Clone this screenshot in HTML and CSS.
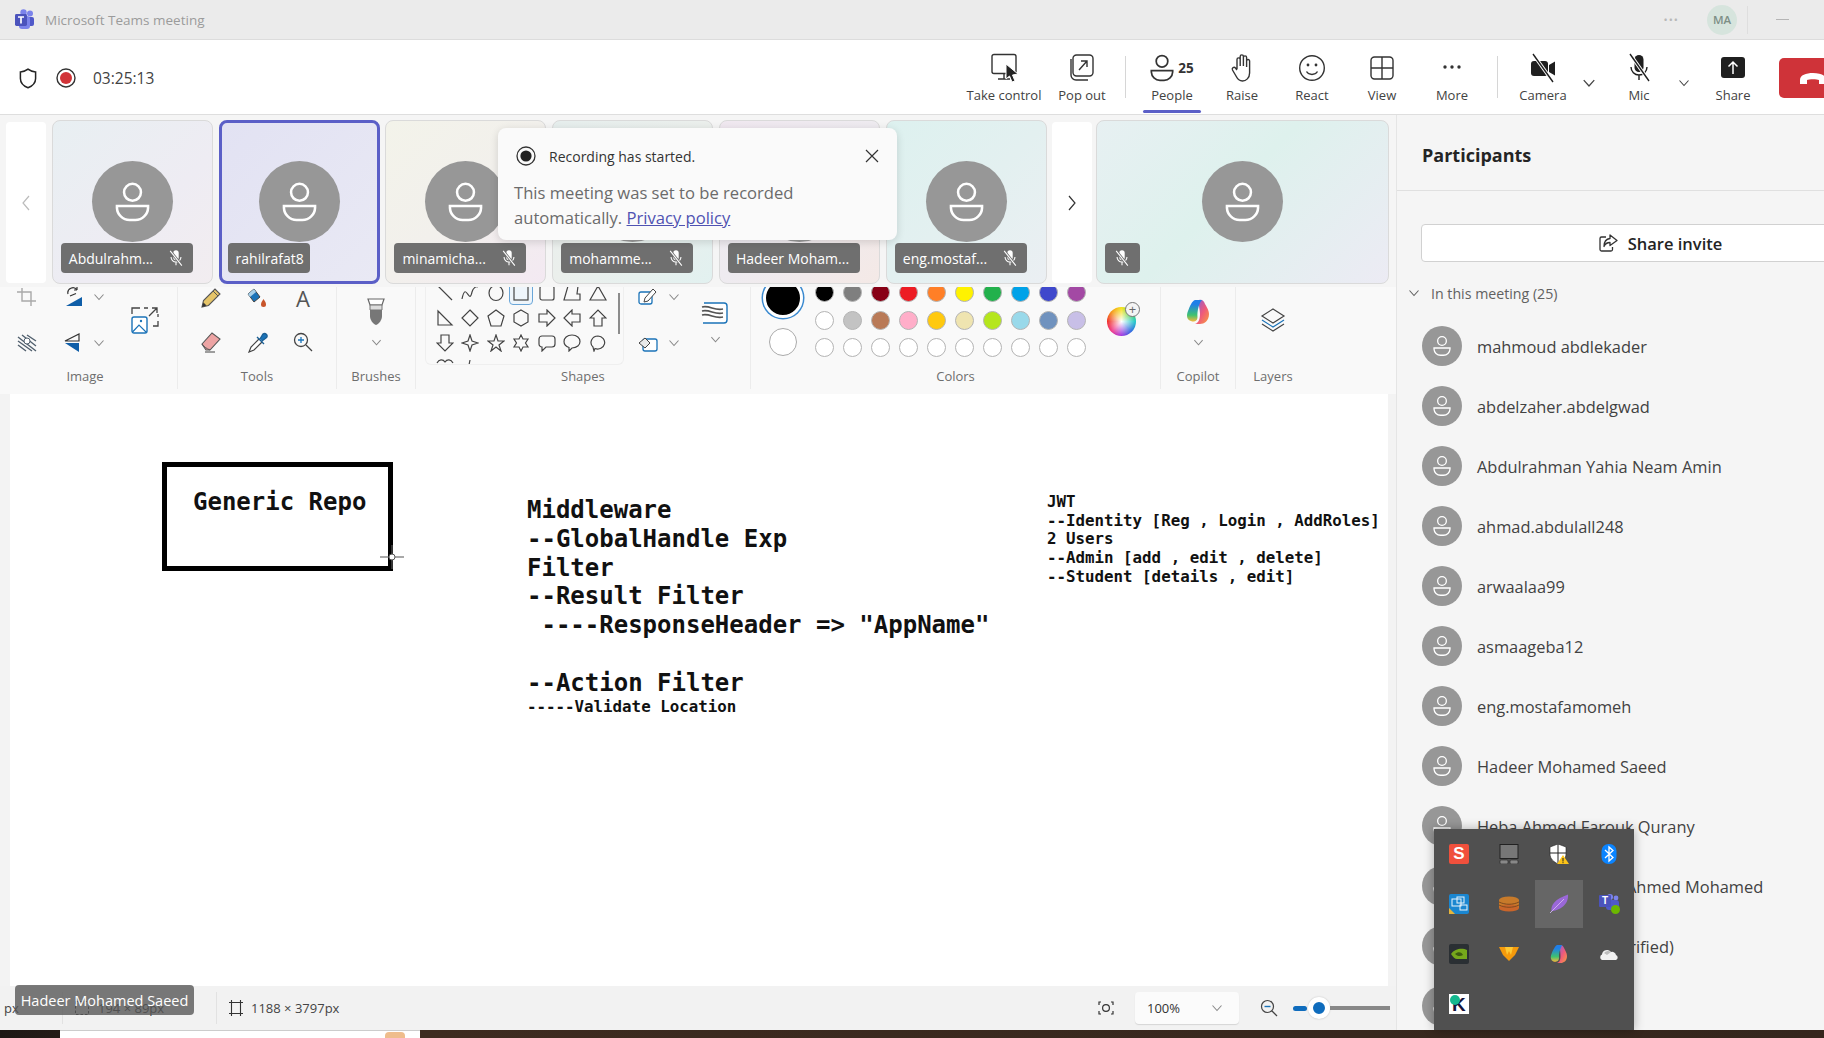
FILE: index.html
```html
<!DOCTYPE html>
<html>
<head>
  <meta charset="utf-8">
  <title>Microsoft Teams meeting</title>
  <link rel="stylesheet" href="styles.css">
</head>
<body>
  <svg class="defs" aria-hidden="true">
    <symbol id="person" viewBox="0 0 36 40">
      <circle cx="18" cy="10" r="8.7" fill="none" stroke="currentColor" stroke-width="2.6"/>
      <path d="M2 24H34V26A13 13 0 0 1 21 38.5H15A13 13 0 0 1 2 26Z" fill="none" stroke="currentColor" stroke-width="2.6"/>
    </symbol>
    <symbol id="mic-off" viewBox="0 0 20 20">
      <rect x="7" y="1.5" width="6" height="11" rx="3" fill="currentColor"/>
      <path d="M4.5 9a5.5 5.5 0 0 0 11 0M10 14.5V18" fill="none" stroke="currentColor" stroke-width="1.2"/>
      <path d="M3.5 2L16.5 18.5" stroke="#6f6f6f" stroke-width="3"/>
      <path d="M3.5 2L16.5 18.5" stroke="currentColor" stroke-width="1.2"/>
    </symbol>
    <symbol id="chev" viewBox="0 0 12 12">
      <path d="M1.5 3.5L6 8.5L10.5 3.5" fill="none" stroke="currentColor" stroke-width="1.1"/>
    </symbol>
  </svg>

  <header class="titlebar">
    <svg class="teams-logo" width="21" height="22" viewBox="0 0 21 22">
      <circle cx="16" cy="4.5" r="3" fill="#7b83eb"/>
      <circle cx="9.5" cy="3.5" r="3.2" fill="#7b83eb"/>
      <rect x="12" y="8" width="8" height="9" rx="2" fill="#5059c9"/>
      <rect x="5" y="7" width="11" height="13" rx="3" fill="#7b83eb"/>
      <rect x="1" y="5" width="12" height="12" rx="1.4" fill="#4b53bc"/>
      <path d="M4 8H10M7 8V14.5" stroke="#fff" stroke-width="1.7"/>
    </svg>
    <span class="title-text">Microsoft Teams meeting</span>
    <span class="title-dots">&#8226;&#8226;&#8226;</span>
    <span class="title-avatar">MA</span>
    <span class="title-divider"></span>
    <span class="title-min"></span>
  </header>

  <section class="toolbar">
    <svg class="shield" width="18" height="21" viewBox="0 0 18 21">
      <path d="M9 1.2C11.3 3 13.8 3.8 16.6 3.9V10.5C16.6 15 13.6 18 9 19.8C4.4 18 1.4 15 1.4 10.5V3.9C4.2 3.8 6.7 3 9 1.2Z" fill="none" stroke="#242424" stroke-width="1.5"/>
    </svg>
    <svg class="rec" width="20" height="20" viewBox="0 0 20 20">
      <circle cx="10" cy="10" r="9" fill="none" stroke="#333" stroke-width="1.4"/>
      <circle cx="10" cy="10" r="6" fill="#d13438"/>
    </svg>
    <span class="timer">03:25:13</span>

    <div class="tools">
      <div class="tool tool-wide">
        <svg width="30" height="30" viewBox="0 0 30 30">
          <rect x="3" y="1.5" width="24" height="19" rx="2" fill="none" stroke="#333" stroke-width="1.4"/>
          <path d="M15 21V26M9 26H21" stroke="#333" stroke-width="1.4"/>
          <path d="M17 11L29 21L23.5 22L26 28L23 29L20.5 23L17 26Z" fill="#242424" stroke="#fff" stroke-width="1"/>
        </svg>
        <span>Take control</span>
      </div>
      <div class="tool tool-pop">
        <svg width="30" height="30" viewBox="0 0 30 30">
          <rect x="6" y="2" width="20" height="21" rx="3.5" fill="none" stroke="#333" stroke-width="1.4"/>
          <path d="M4 6V22A5 5 0 0 0 9 27H21" fill="none" stroke="#333" stroke-width="1.4"/>
          <path d="M12 17L20 8M14 8H20V14" fill="none" stroke="#333" stroke-width="1.4"/>
        </svg>
        <span>Pop out</span>
      </div>
      <span class="tool-sep"></span>
      <div class="tool tool-people">
        <div class="people-icon">
          <svg class="icon-dark" width="24" height="28"><use href="#person"/></svg>
          <b>25</b>
        </div>
        <span>People</span>
      </div>
      <div class="tool">
        <svg width="30" height="30" viewBox="0 0 30 30">
          <path d="M10 16V6.5a1.6 1.6 0 0 1 3.2 0V13M13.2 13V3.5a1.6 1.6 0 0 1 3.2 0V13M16.4 13V4.5a1.6 1.6 0 0 1 3.2 0V14M19.6 14V8a1.5 1.5 0 0 1 3 0V20C22.6 25 19 28 15.5 28C12 28 10.5 26 9 23L5.5 17C4.5 15 7 13.5 8.5 15L10 17" fill="none" stroke="#333" stroke-width="1.4" stroke-linejoin="round"/>
        </svg>
        <span>Raise</span>
      </div>
      <div class="tool">
        <svg width="30" height="30" viewBox="0 0 30 30">
          <circle cx="15" cy="15" r="12.3" fill="none" stroke="#333" stroke-width="1.4"/>
          <circle cx="11" cy="12" r="1.4" fill="#333"/>
          <circle cx="19" cy="12" r="1.4" fill="#333"/>
          <path d="M9.5 18.5C12 22.5 18 22.5 20.5 18.5" fill="none" stroke="#333" stroke-width="1.4"/>
        </svg>
        <span>React</span>
      </div>
      <div class="tool">
        <svg width="30" height="30" viewBox="0 0 30 30">
          <rect x="4" y="4" width="22" height="22" rx="3.5" fill="none" stroke="#333" stroke-width="1.4"/>
          <path d="M15 4V26M4 15H26" stroke="#333" stroke-width="1.4"/>
        </svg>
        <span>View</span>
      </div>
      <div class="tool">
        <svg width="30" height="30" viewBox="0 0 30 30">
          <circle cx="8" cy="14" r="1.7" fill="#333"/>
          <circle cx="15" cy="14" r="1.7" fill="#333"/>
          <circle cx="22" cy="14" r="1.7" fill="#333"/>
        </svg>
        <span>More</span>
      </div>
      <span class="tool-sep tool-sep-right"></span>
      <div class="tool tool-camera">
        <svg width="30" height="30" viewBox="0 0 30 30">
          <rect x="3" y="8" width="17" height="15" rx="3" fill="#1f1f1f"/>
          <path d="M21 12L27 8.5V22.5L21 19Z" fill="#1f1f1f"/>
          <path d="M5 1L25 29" stroke="#fff" stroke-width="3.4"/>
          <path d="M5 1L25 29" stroke="#1f1f1f" stroke-width="1.4"/>
        </svg>
        <span>Camera</span>
      </div>
      <svg class="tool-chev" width="14" height="14"><use href="#chev"/></svg>
      <div class="tool tool-mic">
        <svg width="30" height="30" viewBox="0 0 30 30">
          <rect x="10.5" y="2" width="9" height="17" rx="4.5" fill="#1f1f1f"/>
          <path d="M7 14a8 8 0 0 0 16 0M15 22V27" fill="none" stroke="#1f1f1f" stroke-width="1.4"/>
          <path d="M6 1L25 28" stroke="#fff" stroke-width="3.4"/>
          <path d="M6 1L25 28" stroke="#1f1f1f" stroke-width="1.4"/>
        </svg>
        <span>Mic</span>
      </div>
      <svg class="tool-chev tool-chev-small" width="14" height="14"><use href="#chev"/></svg>
      <div class="tool tool-share">
        <svg width="30" height="30" viewBox="0 0 30 30">
          <rect x="3" y="4" width="24" height="21" rx="3" fill="#1f1f1f"/>
          <path d="M15 21V9M10.5 13.5L15 9L19.5 13.5" fill="none" stroke="#fff" stroke-width="1.5"/>
        </svg>
        <span>Share</span>
      </div>
      <div class="leave">
        <svg width="30" height="16" viewBox="0 0 30 16">
          <path d="M2 13V9C2 4 8 2 15 2C22 2 28 4 28 9V13H21V9C19 8 11 8 9 9V13Z" fill="#fff"/>
        </svg>
      </div>
    </div>
  </section>

  <div class="content">
    <main class="main">
      <div class="strip">
        <div class="nav-btn">
          <svg width="12" height="18" viewBox="0 0 12 18"><path d="M9 2L3 9L9 16" fill="none" stroke="#bbb" stroke-width="1.2"/></svg>
        </div>
        <div class="tile tile-a">
          <div class="avatar"><svg width="35" height="40"><use href="#person"/></svg></div>
          <div class="name-tag"><span>Abdulrahm...</span><svg width="18" height="18"><use href="#mic-off"/></svg></div>
        </div>
        <div class="tile tile-b tile-active">
          <div class="avatar"><svg width="35" height="40"><use href="#person"/></svg></div>
          <div class="name-tag name-tag-short"><span>rahilrafat8</span></div>
        </div>
        <div class="tile tile-c">
          <div class="avatar"><svg width="35" height="40"><use href="#person"/></svg></div>
          <div class="name-tag"><span>minamicha...</span><svg width="18" height="18"><use href="#mic-off"/></svg></div>
        </div>
        <div class="tile tile-d">
          <div class="avatar"><svg width="35" height="40"><use href="#person"/></svg></div>
          <div class="name-tag"><span>mohamme...</span><svg width="18" height="18"><use href="#mic-off"/></svg></div>
        </div>
        <div class="tile tile-e">
          <div class="avatar"><svg width="35" height="40"><use href="#person"/></svg></div>
          <div class="name-tag"><span>Hadeer Moham...</span></div>
        </div>
        <div class="tile tile-f">
          <div class="avatar"><svg width="35" height="40"><use href="#person"/></svg></div>
          <div class="name-tag"><span>eng.mostaf...</span><svg width="18" height="18"><use href="#mic-off"/></svg></div>
        </div>
        <div class="nav-btn nav-btn-next">
          <svg width="12" height="18" viewBox="0 0 12 18"><path d="M3 2L9 9L3 16" fill="none" stroke="#333" stroke-width="1.2"/></svg>
        </div>
        <div class="tile tile-g tile-self">
          <div class="avatar"><svg width="35" height="40"><use href="#person"/></svg></div>
          <div class="name-tag name-tag-icon"><svg width="18" height="18"><use href="#mic-off"/></svg></div>
        </div>
      </div>

      <div class="ribbon">
        <div class="rib-sec sec-image">
          <div class="rib-body">
            <div class="rib-col col-crop">
              <svg width="22" height="20" viewBox="0 0 22 20"><path d="M6 1V14H20M1 5H15V19" fill="none" stroke="#a9a9a9" stroke-width="1.4"/></svg>
              <svg width="22" height="20" viewBox="0 0 22 20">
                <path d="M2 4L20 18M2 8L16 18M2 12L10 18M6 2L20 13M11 2L20 8" stroke="#51606e" stroke-width="1.4"/>
                <circle cx="11" cy="8" r="3" fill="#fff" stroke="#51606e"/>
              </svg>
            </div>
            <div class="rib-col col-flip">
              <svg width="20" height="20" viewBox="0 0 20 20">
                <path d="M2 19L18 10V19Z" fill="#0f5ea8"/>
                <path d="M4 7A5 5 0 0 1 13 3M13 3V0M13 3H10M6 9L12 6.5" fill="none" stroke="#333" stroke-width="1.2"/>
              </svg>
              <svg width="20" height="20" viewBox="0 0 20 20">
                <path d="M1 10L15 10V19Z" fill="#0f5ea8"/>
                <path d="M1 8L15 1V8Z" fill="none" stroke="#333" stroke-width="1.2"/>
              </svg>
            </div>
            <div class="rib-col col-chev">
              <svg class="chev-gray" width="12" height="12"><use href="#chev"/></svg>
              <svg class="chev-gray" width="12" height="12"><use href="#chev"/></svg>
            </div>
            <div class="rib-col col-resize">
              <svg width="28" height="28" viewBox="0 0 28 28">
                <rect x="1" y="11" width="15" height="16" rx="2" fill="#fff" stroke="#1b73b8" stroke-width="1.4"/>
                <circle cx="10" cy="15" r="1.2" fill="#1b73b8"/>
                <path d="M1.5 26L8 19L15 26" fill="none" stroke="#1b73b8" stroke-width="1.2"/>
                <path d="M1 8V2H9M13 2H17M22 20H27V15M27 11V8M18 10L26 2M21 2H26V7" fill="none" stroke="#444" stroke-width="1.3"/>
              </svg>
            </div>
          </div>
          <div class="rib-label">Image</div>
        </div>

        <div class="rib-sec sec-tools">
          <div class="rib-body">
            <div class="rib-col col-tool">
              <svg width="22" height="22" viewBox="0 0 22 22">
                <path d="M2 20L3.5 13.500L15 2L20 7L8.500 18.500Z" fill="#e5c468" stroke="#555" stroke-width="1.1"/>
                <path d="M2 20L3.500 15.500L6.500 18.500Z" fill="#333"/>
                <path d="M13 4L18 9" stroke="#555"/>
              </svg>
              <svg width="22" height="22" viewBox="0 0 22 22">
                <path d="M2 13L12 2L20 8L10 19H6Z" fill="#eda4a4" stroke="#555" stroke-width="1.1"/>
                <path d="M2 13C3 15 7 18 10 19" fill="none" stroke="#555"/>
                <path d="M5 21H15" stroke="#555" stroke-width="1.1"/>
              </svg>
            </div>
            <div class="rib-col col-tool">
              <svg width="22" height="22" viewBox="0 0 22 22">
                <path d="M2 7L8 2L14 10L8 15Z" fill="#1b73b8" stroke="#444"/>
                <path d="M2 7L8 2L10 5L4 10Z" fill="#a8cfe8"/>
                <path d="M17.5 12C15.5 15 15 16 15 17.5A2.5 2.5 0 0 0 20 17.5C20 16 19.5 15 17.5 12Z" fill="#c8552b"/>
              </svg>
              <svg width="22" height="22" viewBox="0 0 22 22">
                <path d="M13 8L5 16L3 21L8 19L16 11" fill="#fff" stroke="#444" stroke-width="1.2"/>
                <path d="M11 6L18 13M14 8L17 3A2.5 2.5 0 0 1 20.5 6.5L16 10" fill="#1b73b8" stroke="#1b5f95" stroke-width="1.4"/>
              </svg>
            </div>
            <div class="rib-col col-tool">
              <span class="letter-a">A</span>
              <svg width="22" height="22" viewBox="0 0 22 22">
                <circle cx="9" cy="9" r="6.5" fill="none" stroke="#444" stroke-width="1.3"/>
                <path d="M14 14L20 20" stroke="#444" stroke-width="1.3"/>
                <path d="M6 9H12M9 6V12" stroke="#1b73b8" stroke-width="1.3"/>
              </svg>
            </div>
          </div>
          <div class="rib-label">Tools</div>
        </div>

        <div class="rib-sec sec-brush">
          <div class="rib-body rib-stack">
            <svg class="stack-top" width="20" height="28" viewBox="0 0 20 28">
              <path d="M2 1H18L16 7H4Z" fill="#fff" stroke="#666" stroke-width="1.2"/>
              <path d="M4 7H16V18C16 22 13 26 10 27C7 26 4 22 4 18Z" fill="#777"/>
              <path d="M4 7H16V12H4Z" fill="#ddd" stroke="#777"/>
            </svg>
            <svg class="chev-gray" width="11" height="11"><use href="#chev"/></svg>
          </div>
          <div class="rib-label">Brushes</div>
        </div>

        <div class="rib-sec sec-shapes">
          <div class="rib-body">
            <div class="shapes-panel">
              <div class="shapes-grid">
                <svg width="18" height="18" viewBox="0 0 18 18"><path d="M2 2L16 16"/></svg>
                <svg width="18" height="18" viewBox="0 0 18 18"><path d="M1 15C5 -4 8 22 11 8C12 4 15 2 17 3"/></svg>
                <svg width="18" height="18" viewBox="0 0 18 18"><ellipse cx="9" cy="9" rx="7" ry="7.5"/></svg>
                <span class="shape-selected"><svg width="18" height="18" viewBox="0 0 18 18"><rect x="2" y="2" width="14" height="14"/></svg></span>
                <svg width="18" height="18" viewBox="0 0 18 18"><rect x="2" y="2" width="14" height="14" rx="2"/></svg>
                <svg width="18" height="18" viewBox="0 0 18 18"><path d="M5 2H15L14 10H17V16H1Z"/></svg>
                <svg width="18" height="18" viewBox="0 0 18 18"><path d="M9 2L17 16H1Z"/></svg>

                <svg width="18" height="18" viewBox="0 0 18 18"><path d="M2 2L16 16H2Z"/></svg>
                <svg width="18" height="18" viewBox="0 0 18 18"><path d="M9 1L17 9L9 17L1 9Z"/></svg>
                <svg width="18" height="18" viewBox="0 0 18 18"><path d="M9 1L17 7L14 17H4L1 7Z"/></svg>
                <svg width="18" height="18" viewBox="0 0 18 18"><path d="M9 1L16 5V13L9 17L2 13V5Z"/></svg>
                <svg width="18" height="18" viewBox="0 0 18 18"><path d="M1 5H9V1L17 9L9 17V13H1Z"/></svg>
                <svg width="18" height="18" viewBox="0 0 18 18"><path d="M17 5H9V1L1 9L9 17V13H17Z"/></svg>
                <svg width="18" height="18" viewBox="0 0 18 18"><path d="M5 17V9H1L9 1L17 9H13V17Z"/></svg>

                <svg width="18" height="18" viewBox="0 0 18 18"><path d="M5 1V9H1L9 17L17 9H13V1Z"/></svg>
                <svg width="18" height="18" viewBox="0 0 18 18"><path d="M9 1L11 7L17 9L11 11L9 17L7 11L1 9L7 7Z"/></svg>
                <svg width="18" height="18" viewBox="0 0 18 18"><path d="M9 1L11 7H17L12 11L14 17L9 13L4 17L6 11L1 7H7Z"/></svg>
                <svg width="18" height="18" viewBox="0 0 18 18"><path d="M9 1L11 5H16L13.5 9L16 13H11L9 17L7 13H2L4.5 9L2 5H7Z"/></svg>
                <svg width="18" height="18" viewBox="0 0 18 18"><path d="M4 2H14A3 3 0 0 1 17 5V10A3 3 0 0 1 14 13H8L4 17V13A3 3 0 0 1 1 10V5A3 3 0 0 1 4 2Z"/></svg>
                <svg width="18" height="18" viewBox="0 0 18 18"><path d="M9 1C14 1 17 4 17 7.5C17 11 14 14 9 14L6 17V13.5C3 12.5 1 10.5 1 7.5C1 4 4 1 9 1Z"/></svg>
                <svg width="18" height="18" viewBox="0 0 18 18"><path d="M9 2A7 6.5 0 1 1 6 14.5L5 17L4 13A7 6.5 0 0 1 9 2Z"/></svg>

                <svg width="18" height="18" viewBox="0 0 18 18"><path d="M1 4C3 0 7 0 9 3C11 0 15 0 17 4"/></svg>
                <svg width="18" height="18" viewBox="0 0 18 18"><path d="M9 1L8 6H4"/></svg>
              </div>
              <span class="shapes-scroll"></span>
            </div>
            <div class="rib-col col-outline">
              <svg width="20" height="20" viewBox="0 0 20 20">
                <rect x="1" y="5" width="13" height="12" rx="2" fill="#fff" stroke="#1b73b8" stroke-width="1.3"/>
                <path d="M6 15L7 11L15 2L18 5L10 14Z" fill="#fff" stroke="#444"/>
              </svg>
              <svg width="20" height="20" viewBox="0 0 20 20">
                <rect x="5" y="6" width="14" height="12" rx="2" fill="#fff" stroke="#1b73b8" stroke-width="1.3"/>
                <path d="M1 10L7 5L12 10L7 15Z" fill="#e9e9e9" stroke="#444"/>
              </svg>
            </div>
            <div class="rib-col col-chev col-chev-shape">
              <svg class="chev-gray" width="12" height="12"><use href="#chev"/></svg>
              <svg class="chev-gray" width="12" height="12"><use href="#chev"/></svg>
            </div>
            <div class="rib-stack col-style">
              <svg width="30" height="30" viewBox="0 0 30 30">
                <path d="M4 5H24A3 3 0 0 1 27 8V22A3 3 0 0 1 24 25H3" fill="#fff" stroke="#1b73b8" stroke-width="1.4"/>
                <path d="M2 9C10 7 14 13 23 11M2 13C10 11 14 17 23 15M2 17C10 15 14 21 23 19" fill="none" stroke="#555" stroke-width="1.6"/>
              </svg>
              <svg class="chev-gray" width="11" height="11"><use href="#chev"/></svg>
            </div>
          </div>
          <div class="rib-label">Shapes</div>
        </div>

        <div class="rib-sec sec-colors">
          <div class="rib-body">
            <div class="current-colors">
              <span class="current-one"></span>
              <span class="current-two"></span>
            </div>
            <div class="swatches">
              <span class="sw sw-black"></span><span class="sw sw-gray"></span><span class="sw sw-maroon"></span><span class="sw sw-red"></span><span class="sw sw-orange"></span><span class="sw sw-yellow"></span><span class="sw sw-green"></span><span class="sw sw-blue"></span><span class="sw sw-indigo"></span><span class="sw sw-purple"></span>
              <span class="sw"></span><span class="sw sw-silver"></span><span class="sw sw-brown"></span><span class="sw sw-pink"></span><span class="sw sw-gold"></span><span class="sw sw-cream"></span><span class="sw sw-lime"></span><span class="sw sw-sky"></span><span class="sw sw-steel"></span><span class="sw sw-lavender"></span>
              <span class="sw"></span><span class="sw"></span><span class="sw"></span><span class="sw"></span><span class="sw"></span><span class="sw"></span><span class="sw"></span><span class="sw"></span><span class="sw"></span><span class="sw"></span>
            </div>
            <div class="wheel"><span class="wheel-plus">+</span></div>
          </div>
          <div class="rib-label">Colors</div>
        </div>

        <div class="rib-sec sec-copilot">
          <div class="rib-body rib-stack">
            <svg class="stack-top" width="28" height="28" viewBox="0 0 28 28">
              <defs>
                <linearGradient id="cp1" x1="0" y1="0" x2="0" y2="1"><stop offset="0.2" stop-color="#1f7fe8"/><stop offset="0.7" stop-color="#3fc36f"/><stop offset="1" stop-color="#f6b83c"/></linearGradient>
                <linearGradient id="cp2" x1="0" y1="0" x2="1" y2="1"><stop offset="0" stop-color="#7a5fe0"/><stop offset="0.55" stop-color="#f05a7a"/><stop offset="1" stop-color="#f7a03c"/></linearGradient>
              </defs>
              <path d="M15 2C18 1 20 3 21 6C22 8 25 12 25 16C25 23 20 26 16 26H11C15 25 16 20 16 16C16 11 14 6 15 2Z" fill="url(#cp2)"/>
              <path d="M11 2H18C15 5 13 13 13.500 19C13.500 24 9 24 7 23C3 22 2 18 4 13C6 8 8 3 11 2Z" fill="url(#cp1)"/>
            </svg>
            <svg class="chev-gray" width="11" height="11"><use href="#chev"/></svg>
          </div>
          <div class="rib-label">Copilot</div>
        </div>

        <div class="rib-sec sec-layers">
          <div class="rib-body rib-stack">
            <svg class="layers-icon" width="26" height="26" viewBox="0 0 26 26">
              <path d="M13 2L24 9L13 16L2 9Z" fill="none" stroke="#444" stroke-width="1.2"/>
              <path d="M2 13L13 20L24 13" fill="none" stroke="#1b73b8" stroke-width="1.2"/>
              <path d="M2 17L13 24L24 17" fill="none" stroke="#444" stroke-width="1.2"/>
            </svg>
          </div>
          <div class="rib-label">Layers</div>
        </div>
      </div>

      <div class="canvas">
        <div class="drawn-box">Generic Repo</div>
        <div class="note note-middleware">Middleware
--GlobalHandle Exp
Filter
--Result Filter
 ----ResponseHeader =&gt; "AppName"

--Action Filter
<span class="note-small">-----Validate Location</span></div>
        <div class="note note-jwt">JWT
--Identity [Reg , Login , AddRoles]
2 Users
--Admin [add , edit , delete]
--Student [details , edit]</div>
        <svg class="cross-cursor" width="26" height="26" viewBox="0 0 26 26">
          <path d="M13 1V10M13 16V25M1 13H10M16 13H25" stroke="#555" stroke-width="1.2"/>
          <circle cx="13" cy="13" r="3" fill="#fff" stroke="#555"/>
        </svg>
      </div>

      <div class="statusbar">
        <span class="status-cut">px</span>
        <span class="status-divider status-divider-first"></span>
        <svg class="status-icon" width="16" height="16" viewBox="0 0 16 16"><rect x="1.5" y="1.5" width="13" height="13" fill="none" stroke="#444" stroke-dasharray="2.5 2"/></svg>
        <span class="status-text status-text-sel">194 &times; 89px</span>
        <span class="status-divider"></span>
        <svg class="status-icon status-canvas" width="14" height="16" viewBox="0 0 14 16">
          <path d="M2.500 0V16M11.500 0V16M0 2.500H14M0 13.500H14" stroke="#333" stroke-width="1.1"/>
        </svg>
        <span class="status-text">1188 &times; 3797px</span>
        <div class="zoom-controls">
          <svg class="fit-icon" width="18" height="14" viewBox="0 0 18 14">
            <path d="M4 1H2V4M14 1H16V4M4 13H2V10M14 13H16V10" fill="none" stroke="#333" stroke-width="1.2"/>
            <circle cx="9" cy="7" r="3.4" fill="none" stroke="#333" stroke-width="1.2"/>
          </svg>
          <div class="zoom-select"><span>100%</span><svg class="chev-gray" width="12" height="12"><use href="#chev"/></svg></div>
          <svg class="zoom-out" width="18" height="18" viewBox="0 0 18 18">
            <circle cx="7.5" cy="7.5" r="6" fill="none" stroke="#444" stroke-width="1.2"/>
            <path d="M12 12L17 17" stroke="#444" stroke-width="1.2"/>
            <path d="M4.5 7.5H10.5" stroke="#1b73b8" stroke-width="1.4"/>
          </svg>
          <div class="slider">
            <span class="slider-fill"></span>
            <span class="slider-knob"></span>
            <span class="slider-rest"></span>
          </div>
        </div>
      </div>
    </main>

    <aside class="sidebar">
      <h2 class="side-title">Participants</h2>
      <button class="invite">
        <svg width="20" height="20" viewBox="0 0 20 20">
          <path d="M8 4H3.5A1.5 1.5 0 0 0 2 5.5V16.5A1.5 1.5 0 0 0 3.5 18H13A1.5 1.5 0 0 0 14.5 16.5V14" fill="none" stroke="#333" stroke-width="1.3"/>
          <path d="M12 2L19 7.5L12 12.5V9.5C9 9.5 7 11 6 13.5C6 9 8 6 12 5.5Z" fill="none" stroke="#333" stroke-width="1.3" stroke-linejoin="round"/>
        </svg>
        Share invite
      </button>
      <div class="group-head">
        <svg width="12" height="12"><use href="#chev"/></svg>
        <span>In this meeting (25)</span>
      </div>
      <ul class="people">
        <li><span class="avatar-small"><svg width="18" height="20"><use href="#person"/></svg></span>mahmoud abdlekader</li>
        <li><span class="avatar-small"><svg width="18" height="20"><use href="#person"/></svg></span>abdelzaher.abdelgwad</li>
        <li><span class="avatar-small"><svg width="18" height="20"><use href="#person"/></svg></span>Abdulrahman Yahia Neam Amin</li>
        <li><span class="avatar-small"><svg width="18" height="20"><use href="#person"/></svg></span>ahmad.abdulall248</li>
        <li><span class="avatar-small"><svg width="18" height="20"><use href="#person"/></svg></span>arwaalaa99</li>
        <li><span class="avatar-small"><svg width="18" height="20"><use href="#person"/></svg></span>asmaageba12</li>
        <li><span class="avatar-small"><svg width="18" height="20"><use href="#person"/></svg></span>eng.mostafamomeh</li>
        <li><span class="avatar-small"><svg width="18" height="20"><use href="#person"/></svg></span>Hadeer Mohamed Saeed</li>
        <li><span class="avatar-small"><svg width="18" height="20"><use href="#person"/></svg></span>Heba Ahmed Farouk Qurany</li>
        <li><span class="avatar-small"><svg width="18" height="20"><use href="#person"/></svg></span><span class="name-behind-a">Ahmed Mohamed</span></li>
        <li><span class="avatar-small"><svg width="18" height="20"><use href="#person"/></svg></span><span class="name-behind-b">(Unverified)</span></li>
        <li><span class="avatar-small"><svg width="18" height="20"><use href="#person"/></svg></span></li>
      </ul>
    </aside>
  </div>

  <div class="desktop-strip">
    <span class="desk-window"><span class="desk-bump"></span></span>
  </div>

  <!-- overlays -->
  <div class="toast">
    <div class="toast-head">
      <svg width="20" height="20" viewBox="0 0 20 20">
        <circle cx="10" cy="10" r="9" fill="none" stroke="#333" stroke-width="1.3"/>
        <circle cx="10" cy="10" r="5.6" fill="#222"/>
      </svg>
      <span>Recording has started.</span>
      <svg class="toast-close" width="16" height="16" viewBox="0 0 16 16"><path d="M2 2L14 14M14 2L2 14" stroke="#333" stroke-width="1.2"/></svg>
    </div>
    <p class="toast-body">This meeting was set to be recorded automatically. <a href="#">Privacy policy</a></p>
  </div>

  <div class="speaker-tip">Hadeer Mohamed Saeed</div>

  <div class="tray">
    <span class="tray-cell"><span class="ic-snag">S</span></span>
    <span class="tray-cell">
      <svg width="20" height="20" viewBox="0 0 20 20">
        <rect x="1" y="0.5" width="18" height="14" fill="#777" stroke="#222"/>
        <rect x="1" y="16" width="8" height="4" rx="1" fill="#888" stroke="#222" stroke-width="0.6"/>
        <rect x="11" y="16" width="8" height="4" rx="1" fill="#888" stroke="#222" stroke-width="0.6"/>
      </svg>
    </span>
    <span class="tray-cell">
      <svg width="20" height="20" viewBox="0 0 20 20">
        <path d="M9 0L17 3V10C17 15 13 18 9 20C5 18 1 15 1 10V3Z" fill="#fff" stroke="#222" stroke-width="0.6"/>
        <path d="M9 0V20M1 9H17" stroke="#222"/>
        <path d="M14 11L20 20H8Z" fill="#fcc419"/>
        <path d="M14 14V17.5M14 18.2V19.2" stroke="#222" stroke-width="1"/>
      </svg>
    </span>
    <span class="tray-cell">
      <svg width="20" height="20" viewBox="0 0 20 20">
        <rect x="2.5" y="0" width="15" height="20" rx="7" fill="#0a84ff"/>
        <path d="M6 6L14 13.5L10 17V3L14 6.5L6 14" fill="none" stroke="#fff" stroke-width="1.3"/>
      </svg>
    </span>

    <span class="tray-cell">
      <svg width="20" height="20" viewBox="0 0 20 20">
        <rect width="20" height="20" rx="2" fill="#1a86d0"/>
        <rect x="3" y="5" width="9" height="7" fill="none" stroke="#e9f4fb"/>
        <rect x="8" y="3" width="7" height="6" fill="none" stroke="#e9f4fb"/>
        <rect x="11" y="11" width="7" height="5" fill="none" stroke="#e9f4fb"/>
        <path d="M0 14L6 20H0Z" fill="#e6b53a"/>
      </svg>
    </span>
    <span class="tray-cell">
      <svg width="20" height="20" viewBox="0 0 20 20">
        <ellipse cx="10" cy="6" rx="10" ry="3.6" fill="#c77a2a"/>
        <rect y="6" width="20" height="8" fill="#c77a2a"/>
        <ellipse cx="10" cy="14" rx="10" ry="3.6" fill="#c9652a"/>
        <path d="M0 8C6 11 14 11 20 8M0 11C6 14 14 14 20 11" fill="none" stroke="#7e4a20"/>
      </svg>
    </span>
    <span class="tray-cell tray-active">
      <svg width="20" height="20" viewBox="0 0 20 20">
        <path d="M0.500 19.500C1.500 19 2 18 2.500 17C1.500 11 7 6 11 4C14 2.500 17 1.500 19 0.500C19.500 6 17 10 14 12.500C11 15 7 16.500 3.500 17Z" fill="#9a68d8"/>
        <path d="M1 19L15 5" stroke="#d9c2f5" stroke-width="0.8"/>
      </svg>
    </span>
    <span class="tray-cell">
      <svg width="20" height="20" viewBox="0 0 20 20">
        <circle cx="17" cy="4" r="2.4" fill="#7b83eb"/>
        <circle cx="11" cy="3" r="3" fill="#7b83eb"/>
        <rect x="7" y="6" width="13" height="10" rx="3" fill="#5059c9"/>
      </svg>
      <span class="ic-teams-t">T</span>
      <span class="ic-teams-ok"></span>
    </span>

    <span class="tray-cell">
      <svg width="20" height="20" viewBox="0 0 20 20">
        <rect width="20" height="20" rx="2" fill="#2a2f33"/>
        <path d="M2 10C6 4 14 4 18 6V15H8C6 15 4 13 2 10Z" fill="#76a81c"/>
        <path d="M6 10C9 7 13 8 14 11C11 13 8 12 6 10Z" fill="#3e5c10"/>
      </svg>
    </span>
    <span class="tray-cell">
      <svg width="20" height="20" viewBox="0 0 20 20"><path d="M0 3H20L16 11L10 17L4 11Z" fill="#f59a0c"/><path d="M6 3L8 11L10 7L12 11L14 3" fill="#ffc933"/></svg>
    </span>
    <span class="tray-cell">
      <svg width="20" height="20" viewBox="0 0 20 20">
        <path d="M11 1C13 0.500 14.500 2 15 4C16 6 18 9 18 12C18 17 14.500 19 12 19H8C11 18 11.500 15 11.500 12C11.500 8 10.500 4 11 1Z" fill="url(#cp2)"/>
        <path d="M8 1H13C11 5 9.500 10 10 14C10 18 6 18 4.500 17.500C2 16.500 1 13.500 2.500 10C4 6 6 2 8 1Z" fill="url(#cp1)"/>
      </svg>
    </span>
    <span class="tray-cell">
      <svg width="20" height="20" viewBox="0 0 20 20">
        <path d="M3 16A3 3 0 0 1 3 10.500A5 5 0 0 1 12 8A4 4 0 0 1 17 11A2.700 2.700 0 0 1 17 16Z" fill="#f2f2f2"/>
        <path d="M5 9A5 5 0 0 1 12 8L8 11Z" fill="#bdbdbd"/>
      </svg>
    </span>

    <span class="tray-cell">
      <span class="ic-k">K<span class="ic-k-ok"></span></span>
    </span>
  </div>
</body>
</html>
```

FILE: styles.css
```css
* {
  box-sizing: border-box;
}
html, body {
  margin: 0;
  height: 100%;
}
body {
  position: relative;
  width: 1824px;
  height: 1038px;
  overflow: hidden;
  display: flex;
  flex-direction: column;
  font-family: "Open Sans", "Noto Sans", sans-serif;
  color: #242424;
  background: #f3f3f3;
}
.defs {
  position: absolute;
  width: 0;
  height: 0;
}

/* title bar */
.titlebar {
  height: 40px;
  flex: none;
  display: flex;
  align-items: center;
  padding-left: 14px;
  background: #ebebeb;
  border-bottom: 1px solid #dcdcdc;
}
.title-text {
  margin-left: 10px;
  font-size: 13.5px;
  color: #9b9b9b;
}
.title-dots {
  margin-left: auto;
  font-size: 11px;
  letter-spacing: 1px;
  color: #b8b8b8;
}
.title-avatar {
  width: 30px;
  height: 30px;
  margin-left: 28px;
  border-radius: 50%;
  display: flex;
  align-items: center;
  justify-content: center;
  font-size: 11.5px;
  font-weight: 600;
  color: #7d8f86;
  background: #d6e4dd;
}
.title-divider {
  width: 1px;
  height: 28px;
  margin-left: 10px;
  background: #dedede;
}
.title-min {
  width: 13px;
  height: 1px;
  margin: 0 35px 0 28px;
  background: #b5b5b5;
}

/* meeting toolbar */
.toolbar {
  height: 75px;
  flex: none;
  display: flex;
  align-items: center;
  padding-left: 19px;
  background: #fff;
  border-bottom: 1px solid #dedede;
}
.shield,
.rec,
.timer {
  margin-top: 2px;
}
.rec {
  margin-left: 19px;
}
.timer {
  margin-left: 17px;
  font-size: 15.5px;
  color: #424242;
}
.tools {
  margin-left: auto;
  height: 100%;
  display: flex;
  align-items: flex-start;
}
.tool {
  width: 70px;
  padding-top: 13px;
  height: 100%;
  display: flex;
  flex-direction: column;
  align-items: center;
  position: relative;
  font-size: 13px;
  color: #424242;
}
.tool span {
  margin-top: 3px;
  white-space: nowrap;
}
.tool-wide {
  width: 80px;
}
.tool-pop {
  width: 76px;
}
.tool-sep {
  width: 1px;
  height: 42px;
  margin: 16px 11px 0 5px;
  background: #d6d6d6;
}
.tool-sep-right {
  margin-left: 10px;
}
.people-icon {
  height: 30px;
  display: flex;
  align-items: center;
  gap: 4px;
}
.people-icon b {
  font-size: 13.5px;
  color: #333;
}
.icon-dark {
  color: #333;
}
.tool-people::after {
  content: "";
  position: absolute;
  left: 6px;
  right: 6px;
  bottom: 1px;
  height: 3px;
  border-radius: 2px;
  background: #5b5fc7;
}
.tool-camera {
  margin-left: -1px;
}
.tool-chev {
  width: 22px;
  margin-top: 36px;
  color: #444;
}
.tool-mic {
  width: 78px;
}
.tool-chev-small {
  width: 12px;
}
.tool-share {
  width: 86px;
}
.leave {
  width: 45px;
  height: 40px;
  margin: 18px 0 0 3px;
  padding: 12px 0 0 19px;
  border-radius: 5px 0 0 5px;
  overflow: hidden;
  background: #cf3339;
}

/* layout */
.content {
  flex: 1;
  min-height: 0;
  display: flex;
}
.main {
  width: 1396px;
  flex: none;
  display: flex;
  flex-direction: column;
  overflow: hidden;
}

/* video strip */
.strip {
  height: 172px;
  flex: none;
  display: flex;
  gap: 5.8px;
  padding: 5px 0 0 6px;
  background: #f5f5f5;
}
.nav-btn {
  width: 40px;
  height: 161px;
  margin-top: 2px;
  display: flex;
  align-items: center;
  justify-content: center;
  border-radius: 4px;
  background: #fff;
}
.nav-btn-next {
  margin-left: -1px;
  margin-right: -1px;
}
.tile {
  width: 161px;
  height: 164px;
  flex: none;
  display: flex;
  flex-direction: column;
  padding: 40px 8px 9px;
  border: 1px solid #dadada;
  border-radius: 8px;
}
.tile-active {
  padding: 38px 6px 7px;
  border: 3px solid #5b5fc7;
}
.tile-self {
  width: 293px;
}
.tile-a { background: linear-gradient(135deg, #e8eff2, #eeecf3 60%, #f2edf0); }
.tile-b { background: linear-gradient(135deg, #e2e2f3, #e9e9f4); }
.tile-c { background: linear-gradient(135deg, #f3f3ea, #f2f0ec 50%, #f3e9f2); }
.tile-d { background: linear-gradient(135deg, #e6eeed, #ebefec 50%, #e2f1f0); }
.tile-e { background: linear-gradient(135deg, #f0e8f0, #eeebf0 50%, #f4e9e6); }
.tile-f { background: linear-gradient(135deg, #ddf1ef, #e3f0f0 50%, #ebeff3); }
.tile-g { background: linear-gradient(135deg, #e7f0f2, #def1ed 45%, #ecebf4); }
.avatar {
  width: 81px;
  height: 81px;
  flex: none;
  align-self: center;
  display: flex;
  align-items: center;
  justify-content: center;
  border-radius: 50%;
  color: #fff;
  background: #979797;
}
.name-tag {
  width: 132px;
  height: 30px;
  margin-top: 1px;
  flex: none;
  display: flex;
  align-items: center;
  justify-content: space-between;
  padding: 0 8px;
  border-radius: 4px;
  font-size: 14px;
  white-space: nowrap;
  color: #fff;
  background: #6f6f6f;
}
.name-tag-short {
  width: 82px;
}
.name-tag-icon {
  width: 35px;
}

/* paint ribbon */
.ribbon {
  height: 107px;
  flex: none;
  display: flex;
  overflow: hidden;
  color: #666;
  background: #f9f9f9;
}
.rib-sec {
  height: 102px;
  flex: none;
  display: flex;
  flex-direction: column;
  border-right: 1px solid #ececec;
}
.rib-body {
  height: 79px;
  flex: none;
  display: flex;
}
.rib-label {
  flex: 1;
  font-size: 13px;
  line-height: 20px;
  text-align: center;
  color: #6e6e6e;
}
.rib-col {
  height: 66px;
  flex: none;
  display: flex;
  flex-direction: column;
  align-items: center;
  justify-content: space-between;
}
.rib-stack {
  display: flex;
  flex-direction: column;
  align-items: center;
}
.chev-gray {
  color: #8a8a8a;
}
.sec-image {
  width: 178px;
}
.sec-image .rib-body {
  padding-left: 15px;
}
.sec-image .rib-label {
  padding-right: 7px;
}
.col-crop {
  width: 24px;
}
.col-flip {
  width: 24px;
  margin-left: 23px;
}
.col-chev {
  width: 12px;
  margin-left: 7px;
  padding: 4px 0;
}
.col-resize {
  width: 30px;
  margin-left: 25px;
  justify-content: center;
}
.sec-tools {
  width: 159px;
}
.sec-tools .rib-body {
  padding-left: 10px;
}
.col-tool {
  width: 46px;
}
.letter-a {
  height: 22px;
  font-size: 22px;
  line-height: 22px;
  color: #555;
}
.sec-brush {
  width: 79px;
}
.stack-top {
  margin-top: 11px;
  margin-bottom: 11px;
}
.sec-shapes {
  width: 335px;
}
.sec-shapes .rib-label {
  text-align: left;
  padding-left: 145px;
}
.shapes-panel {
  position: relative;
  width: 199px;
  height: 78px;
  margin-left: 9px;
  overflow: hidden;
  border: 1px solid #efefef;
  border-top: none;
  border-radius: 0 0 6px 6px;
}
.shapes-grid {
  display: grid;
  grid-template-columns: repeat(7, 25.5px);
  grid-auto-rows: 25px;
  margin: -7px 0 0 6px;
  justify-items: center;
  align-items: center;
}
.shapes-grid svg {
  fill: none;
  stroke: #444;
  stroke-width: 1.2;
}
.shape-selected {
  width: 24px;
  height: 24px;
  display: flex;
  align-items: center;
  justify-content: center;
  border: 1px solid #6aa6d8;
  border-radius: 4px;
  background: #eef5fb;
}
.shapes-scroll {
  position: absolute;
  left: 192px;
  top: 6px;
  width: 2px;
  height: 41px;
  background: #8c8c8c;
}
.col-outline {
  width: 20px;
  margin-left: 14px;
}
.col-chev-shape {
  margin-left: 10px;
}
.col-style {
  width: 30px;
  margin-left: 20px;
  padding-top: 11px;
  gap: 6px;
}
.sec-colors {
  width: 410px;
}
.sec-colors .rib-body {
  padding-left: 12px;
}
.current-colors {
  width: 40px;
  margin-top: -9px;
  display: flex;
  flex-direction: column;
  align-items: center;
  gap: 10px;
}
.current-one {
  width: 40px;
  height: 40px;
  border: 3px solid #fff;
  border-radius: 50%;
  background: #000;
  box-shadow: 0 0 0 1.5px #3b8ad0;
}
.current-two {
  width: 28px;
  height: 28px;
  border: 1px solid #aaa;
  border-radius: 50%;
  background: #fff;
}
.swatches {
  width: 280px;
  margin: -8px 0 0 7px;
  display: grid;
  grid-template-columns: repeat(10, 28px);
  grid-auto-rows: 27.5px;
  justify-items: center;
  align-items: center;
}
.sw {
  width: 19px;
  height: 19px;
  border: 1px solid #b4b4b4;
  border-radius: 50%;
  background: #fff;
}
.sw-black { background: #000; }
.sw-gray { background: #7f7f7f; }
.sw-maroon { background: #880015; }
.sw-red { background: #ed1c24; }
.sw-orange { background: #ff7f27; }
.sw-yellow { background: #fff200; }
.sw-green { background: #22b14c; }
.sw-blue { background: #00a2e8; }
.sw-indigo { background: #3f48cc; }
.sw-purple { background: #a349a4; }
.sw-silver { background: #c3c3c3; }
.sw-brown { background: #b97a57; }
.sw-pink { background: #ffaec9; }
.sw-gold { background: #ffc90e; }
.sw-cream { background: #efe4b0; }
.sw-lime { background: #b5e61d; }
.sw-sky { background: #99d9ea; }
.sw-steel { background: #7092be; }
.sw-lavender { background: #c8bfe7; }
.wheel {
  position: relative;
  width: 29px;
  height: 29px;
  margin: 20px 0 0 17px;
  border-radius: 50%;
  background:
    radial-gradient(circle, #fff 0, rgba(255, 255, 255, 0) 68%),
    conic-gradient(#f5e21a, #5bd23c, #1fc8c8, #2f6be0, #a43be0, #f03a8c, #f0322c, #f59a1a, #f5e21a);
}
.wheel-plus {
  position: absolute;
  right: -4px;
  top: -5px;
  width: 15px;
  height: 15px;
  display: flex;
  align-items: center;
  justify-content: center;
  border: 1px solid #777;
  border-radius: 50%;
  font-size: 13px;
  line-height: 1;
  color: #666;
  background: #f4f4f4;
}
.sec-copilot {
  width: 75px;
}
.sec-layers {
  width: 74px;
  border-right: none;
}
.layers-icon {
  margin-top: 20px;
}

/* paint canvas */
.canvas {
  position: relative;
  height: 592px;
  flex: none;
  margin: 0 8px 0 10px;
  background: #fff;
}
.drawn-box {
  position: absolute;
  left: 152px;
  top: 68px;
  width: 231px;
  height: 109px;
  padding: 21px 0 0 26px;
  border: 5px solid #000;
  font: bold 24px/28px "DejaVu Sans Mono", monospace;
  color: #111;
  white-space: pre;
}
.note {
  position: absolute;
  font-family: "DejaVu Sans Mono", monospace;
  font-weight: bold;
  white-space: pre;
  color: #111;
}
.note-middleware {
  left: 517px;
  top: 102px;
  font-size: 24px;
  line-height: 28.8px;
}
.note-small {
  display: block;
  font-size: 15.8px;
  line-height: 18px;
}
.note-jwt {
  left: 1037px;
  top: 99px;
  font-size: 15.8px;
  line-height: 18.7px;
}
.cross-cursor {
  position: absolute;
  left: 369px;
  top: 150px;
}

/* status bar */
.statusbar {
  height: 44px;
  flex: none;
  display: flex;
  align-items: center;
  padding-right: 6px;
  font-size: 13px;
  color: #444;
  background: #f2f2f2;
}
.status-cut {
  width: 16px;
  margin-left: 4px;
}
.status-divider {
  width: 1px;
  height: 32px;
  background: #e2e2e2;
}
.status-divider-first {
  margin-left: 42px;
}
.status-icon {
  margin-left: 11px;
}
.status-text {
  margin-left: 8px;
}
.status-text-sel {
  width: 118px;
}
.status-canvas {
  margin-left: 12px;
}
.zoom-controls {
  margin-left: auto;
  display: flex;
  align-items: center;
}
.zoom-select {
  width: 104px;
  height: 32px;
  margin-left: 20px;
  padding: 0 16px 0 12px;
  display: flex;
  align-items: center;
  justify-content: space-between;
  border-radius: 4px;
  font-size: 13px;
  color: #333;
  background: #fbfbfb;
  box-shadow: 0 1px 1px rgba(0, 0, 0, 0.12);
}
.zoom-out {
  margin-left: 21px;
}
.slider {
  width: 97px;
  margin-left: 15px;
  display: flex;
  align-items: center;
}
.slider-fill {
  width: 14px;
  height: 5px;
  border-radius: 3px;
  background: #0f6cbd;
}
.slider-knob {
  width: 22px;
  height: 22px;
  margin-left: 1px;
  border: 5.5px solid #fff;
  border-radius: 50%;
  background: #0f6cbd;
  box-shadow: 0 0 2px rgba(0, 0, 0, 0.2);
}
.slider-rest {
  flex: 1;
  height: 4px;
  background: #888;
}

/* participants */
.sidebar {
  flex: 1;
  min-width: 0;
  overflow: hidden;
  border-left: 1px solid #e5e5e5;
  background: #f5f5f5;
}
.side-title {
  height: 76px;
  margin: 0;
  padding: 28px 0 0 25px;
  border-bottom: 1px solid #e0e0e0;
  font-size: 18px;
  line-height: 24px;
  font-weight: 700;
  color: #242424;
}
.invite {
  width: 478px;
  height: 38px;
  margin: 33px 0 0 24px;
  display: flex;
  align-items: center;
  justify-content: center;
  gap: 10px;
  border: 1px solid #d1d1d1;
  border-radius: 4px;
  font-family: inherit;
  font-size: 16.5px;
  font-weight: 600;
  color: #242424;
  background: #fff;
}
.group-head {
  height: 28px;
  margin-top: 17px;
  padding-left: 11px;
  display: flex;
  align-items: center;
  gap: 11px;
  font-size: 14.2px;
  color: #616161;
}
.people {
  list-style: none;
  margin: 9px 0 0;
  padding: 0;
}
.people li {
  height: 60px;
  padding-left: 25px;
  display: flex;
  align-items: center;
  font-size: 16.4px;
  white-space: nowrap;
  color: #424242;
}
.avatar-small {
  width: 40px;
  height: 40px;
  flex: none;
  margin-right: 15px;
  display: flex;
  align-items: center;
  justify-content: center;
  border-radius: 50%;
  color: #fff;
  background: #979797;
}
.name-behind-a {
  margin-left: 149px;
}
.name-behind-b {
  margin-left: 108px;
}

/* desktop peeking under the window */
.desktop-strip {
  height: 8px;
  flex: none;
  padding-left: 60px;
  background: linear-gradient(90deg, #1d1815 0, #241b16 60px, #3e2b20 420px, #35261d 100%);
}
.desk-window {
  position: relative;
  display: block;
  width: 360px;
  height: 8px;
  border-top: 1px solid #ccc;
  background: #fff;
}
.desk-bump {
  position: absolute;
  left: 325px;
  top: 1px;
  width: 20px;
  height: 7px;
  border-radius: 4px 4px 0 0;
  background: #efbd8c;
}

/* recording toast */
.toast {
  position: absolute;
  left: 498px;
  top: 128px;
  width: 399px;
  height: 112px;
  padding: 17px 16px 0 18px;
  border-radius: 8px;
  background: #fafafa;
  box-shadow: 0 2px 8px rgba(0, 0, 0, 0.14);
}
.toast-head {
  display: flex;
  align-items: center;
  height: 22px;
  font-size: 14px;
  color: #333;
}
.toast-head span {
  margin-left: 13px;
}
.toast-close {
  margin-left: auto;
  margin-right: 1px;
}
.toast-body {
  margin: 13px 0 0 -2px;
  width: 300px;
  font-size: 16.6px;
  line-height: 25px;
  color: #6b6b6b;
}
.toast-body a {
  color: #4f52b2;
}

/* active speaker tooltip */
.speaker-tip {
  position: absolute;
  left: 15px;
  top: 985px;
  width: 179px;
  height: 30px;
  display: flex;
  align-items: center;
  justify-content: center;
  border-radius: 4px;
  font-size: 14.5px;
  white-space: nowrap;
  color: #fff;
  background: rgba(84, 84, 84, 0.78);
}

/* system tray flyout */
.tray {
  position: absolute;
  left: 1434px;
  top: 829px;
  width: 200px;
  height: 201px;
  display: grid;
  grid-template-columns: repeat(4, 50px);
  grid-auto-rows: 50px;
  background: #505050;
  box-shadow: 0 0 10px rgba(0, 0, 0, 0.3);
}
.tray-cell {
  position: relative;
  display: flex;
  align-items: center;
  justify-content: center;
}
.tray-active {
  background: #666;
  margin: 1px;
}
.ic-snag {
  width: 20px;
  height: 20px;
  display: flex;
  align-items: center;
  justify-content: center;
  border-radius: 2px;
  font: bold 17px/20px "Liberation Sans", sans-serif;
  color: #fff;
  background: #f0503c;
}
.ic-teams-t {
  position: absolute;
  left: 15px;
  top: 16px;
  width: 12px;
  height: 12px;
  display: flex;
  align-items: center;
  justify-content: center;
  border-radius: 1px;
  font: bold 10px/12px "Liberation Sans", sans-serif;
  color: #fff;
  background: #4b53bc;
}
.ic-teams-ok {
  position: absolute;
  left: 27px;
  top: 26px;
  width: 9px;
  height: 9px;
  border-radius: 50%;
  background: #6bb700;
}
.ic-k {
  position: relative;
  width: 20px;
  height: 20px;
  padding-left: 3px;
  font: bold 19px/22px "Liberation Sans", sans-serif;
  color: #14143c;
  background: #fff;
}
.ic-k-ok {
  position: absolute;
  left: 1px;
  top: 1px;
  width: 10px;
  height: 10px;
  border-radius: 50%;
  background: #14b88f;
}
```
